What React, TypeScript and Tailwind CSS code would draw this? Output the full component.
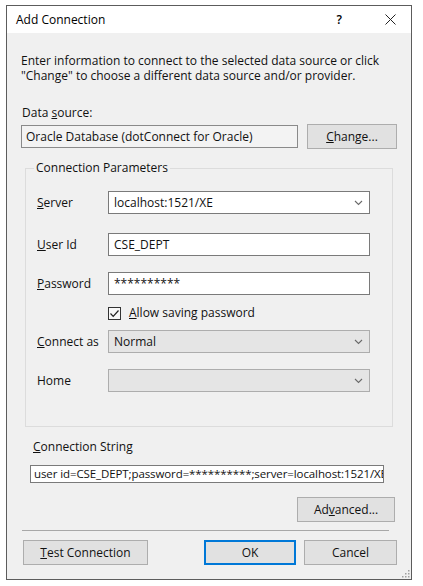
import React from "react";

const Chevron = () => (
  <svg width="9" height="6" viewBox="0 0 9 6" className="shrink-0">
    <path d="M1 1 L4.5 4.5 L8 1" fill="none" stroke="#6a6a6a" strokeWidth="1.1" />
  </svg>
);

function Combo({ value, gray }: { value: string; gray?: boolean }) {
  return (
    <div
      className={
        "flex items-center w-[262px] h-[23px] pl-[5px] pr-[6px] border " +
        (gray ? "bg-[#e5e5e5] border-[#adadad]" : "bg-white border-[#7a7a7a]")
      }
    >
      <span className="flex-1 leading-none">{value}</span>
      <Chevron />
    </div>
  );
}

function Text({ value }: { value: string }) {
  return (
    <div className="flex items-center w-[262px] h-[23px] pl-[5px] bg-white border border-[#7a7a7a]">
      <span className="leading-none">{value}</span>
    </div>
  );
}

function Label({ children }: { children: React.ReactNode }) {
  return <div className="w-[82px] shrink-0 pl-[11px]">{children}</div>;
}

export default function App() {
  return (
    <div
      className="w-[423px] h-[586px] bg-white pt-[5px] pl-[6px] text-[12px] text-[#111] leading-[14px]"
      style={{ fontFamily: '"Open Sans", "Noto Sans", sans-serif' }}
    >
      <div className="w-[406px] h-[575px] border border-[#5c5c5c] bg-[#f0f0f0] flex flex-col relative">
        {/* title bar */}
        <div className="h-[27px] bg-white flex items-center shrink-0">
          <span className="ml-[9px] text-[12px] text-black">Add Connection</span>
          <span className="ml-auto text-[12px] text-black font-semibold">?</span>
          <svg width="11" height="11" viewBox="0 0 11 11" className="ml-[43px] mr-[15px]">
            <path d="M0.5 0.5 L10.5 10.5 M10.5 0.5 L0.5 10.5" stroke="#222" strokeWidth="1" />
          </svg>
        </div>

        {/* intro */}
        <div className="mt-[20px] ml-[14px] leading-[15px]">
          <div>Enter information to connect to the selected data source or click</div>
          <div>"Change" to choose a different data source and/or provider.</div>
        </div>

        <div className="mt-[23px] ml-[15px]">
          Data <span className="underline">s</span>ource:
        </div>

        <div className="mt-[4px] flex items-center">
          <div className="ml-[14px] w-[277px] h-[23px] border border-[#8a8a8a] bg-[#f3f3f3] flex items-center pl-[4px] overflow-hidden whitespace-nowrap">
            <span className="leading-none">Oracle Database (dotConnect for Oracle)</span>
          </div>
          <button className="ml-[9px] w-[90px] h-[25px] bg-[#e1e1e1] border border-[#adadad]">
            <span className="underline">C</span>hange...
          </button>
        </div>

        {/* group */}
        <fieldset className="mt-[12px] ml-[18px] w-[368px] h-[266px] border border-[#dcdcdc] px-0 pb-0 flex flex-col">
          <legend className="ml-[8px] px-[2px]">Connection Parameters</legend>

          <div className="mt-[16px] flex items-center">
            <Label>
              <span className="underline">S</span>erver
            </Label>
            <Combo value="localhost:1521/XE" />
          </div>

          <div className="mt-[19px] flex items-center">
            <Label>
              <span className="underline">U</span>ser Id
            </Label>
            <Text value="CSE_DEPT" />
          </div>

          <div className="mt-[16px] flex items-center">
            <Label>
              <span className="underline">P</span>assword
            </Label>
            <Text value="**********" />
          </div>

          <div className="mt-[11px] flex items-center">
            <div className="w-[82px] shrink-0" />
            <div className="w-[13px] h-[13px] border border-[#333] bg-[#f8f8f8] flex items-center justify-center">
              <svg width="11" height="11" viewBox="0 0 11 11">
                <path d="M1.5 5.5 L4.2 8.3 L9.5 2.5" fill="none" stroke="#222" strokeWidth="1.2" />
              </svg>
            </div>
            <span className="ml-[8px]">
              <span className="underline">A</span>llow saving password
            </span>
          </div>

          <div className="mt-[10px] flex items-center">
            <Label>
              <span className="underline">C</span>onnect as
            </Label>
            <Combo value="Normal" gray />
          </div>

          <div className="mt-[16px] flex items-center">
            <Label>Home</Label>
            <Combo value="" gray />
          </div>
        </fieldset>

        <div className="mt-[13px] ml-[26px]">
          <span className="underline">C</span>onnection String
        </div>

        <div className="mt-[11px] ml-[23px] w-[354px] h-[18px] border border-[#7a7a7a] bg-white overflow-hidden whitespace-nowrap flex items-center pl-[3px]">
          <span className="leading-none text-[11.5px] tracking-[-0.1px]">user id=CSE_DEPT;password=**********;server=localhost:1521/XE</span>
        </div>

        <div className="mt-[14px] flex justify-end pr-[16px]">
          <button className="w-[98px] h-[25px] bg-[#e1e1e1] border border-[#adadad]">
            Ad<span className="underline">v</span>anced...
          </button>
        </div>

        <div className="mt-[8px] ml-[15px] w-[367px] h-px bg-[#a8a8a8]" />

        <div className="mt-[9px] flex items-center">
          <button className="ml-[16px] w-[125px] h-[25px] bg-[#e1e1e1] border border-[#adadad]">
            <span className="underline">T</span>est Connection
          </button>
          <button className="ml-auto w-[92px] h-[25px] bg-[#e1e1e1] border-2 border-[#0078d7]">
            OK
          </button>
          <button className="ml-[8px] mr-[14px] w-[93px] h-[25px] bg-[#e1e1e1] border border-[#adadad]">
            Cancel
          </button>
        </div>

        <svg width="8" height="8" viewBox="0 0 8 8" className="absolute right-[1px] bottom-[1px]">
          <rect x="6" y="0" width="1.5" height="1.5" fill="#a0a0a0" />
          <rect x="3" y="3" width="1.5" height="1.5" fill="#a0a0a0" />
          <rect x="6" y="3" width="1.5" height="1.5" fill="#a0a0a0" />
          <rect x="0" y="6" width="1.5" height="1.5" fill="#a0a0a0" />
          <rect x="3" y="6" width="1.5" height="1.5" fill="#a0a0a0" />
          <rect x="6" y="6" width="1.5" height="1.5" fill="#a0a0a0" />
        </svg>
      </div>
    </div>
  );
}
